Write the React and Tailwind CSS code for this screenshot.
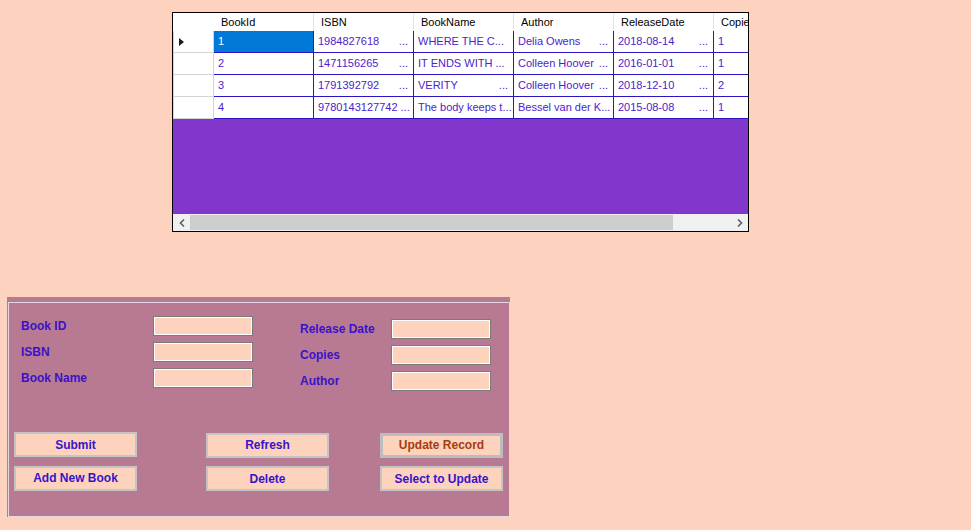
import React from "react";

const columns = ["BookId", "ISBN", "BookName", "Author", "ReleaseDate", "Copies"];

const books = [
    {
        id: "1",
        isbn: ["1984827618", true],
        name: ["WHERE THE C...", false],
        author: ["Delia Owens", true],
        date: ["2018-08-14", true],
        copies: "1",
    },
    {
        id: "2",
        isbn: ["1471156265", true],
        name: ["IT ENDS WITH ...", false],
        author: ["Colleen Hoover", true],
        date: ["2016-01-01", true],
        copies: "1",
    },
    {
        id: "3",
        isbn: ["1791392792", true],
        name: ["VERITY", true],
        author: ["Colleen Hoover", true],
        date: ["2018-12-10", true],
        copies: "2",
    },
    {
        id: "4",
        isbn: ["9780143127742", true],
        name: ["The body keeps t...", false],
        author: ["Bessel van der K...", false],
        date: ["2015-08-08", true],
        copies: "1",
    },
];

function Cell({ value }) {
    const [text, dots] = value;
    return (
        <div className="w-[100px] flex-none h-full border-r border-b border-[#2a14c6] pl-[4px] pr-[5px] flex items-center justify-between gap-[3px] whitespace-nowrap overflow-hidden">
            <span>{text}</span>
            {dots && <span>...</span>}
        </div>
    );
}

function Field({ label, width }) {
    return (
        <div className="flex items-center h-[20px]">
            <span className={`${width} flex-none font-bold text-[12px] text-[#3a12c9]`}>{label}</span>
            <div className="w-[100px] h-[20px] bg-[#fdd3be] border border-[#7a7a7a] shadow-[inset_0_0_0_1px_#ffffff]" />
        </div>
    );
}

function Button({ label, main }) {
    return (
        <button
            className={
                main
                    ? "w-[123px] h-[25px] bg-[#fdd3be] border-[3px] border-[#bdbdbd] font-bold text-[12px] text-[#a63c0c]"
                    : "w-[123px] h-[25px] bg-[#fdd3be] border-2 border-[#c4c4c4] font-bold text-[12px] text-[#3a12c9]"
            }
        >
            {label}
        </button>
    );
}

export default function App() {
    return (
        <div className="w-[971px] h-[530px] bg-[#fdd2be] overflow-hidden pt-[12px] font-['Liberation_Sans',Arial,sans-serif]">
            {/* book grid */}
            <div className="ml-[172px] w-[577px] h-[220px] border border-black flex flex-col overflow-hidden text-[11px]">
                <div className="h-[18px] flex-none flex bg-white text-black">
                    <div className="w-[41px] flex-none" />
                    {columns.map(col => (
                        <div
                            key={col}
                            className="w-[100px] flex-none h-full border-r border-[#e3e3e3] pl-[7px] flex items-center whitespace-nowrap overflow-hidden"
                        >
                            {col}
                        </div>
                    ))}
                </div>

                {books.map((book, index) => (
                    <div key={book.id} className="h-[22px] flex-none flex bg-white text-[#4c22cc]">
                        <div className="w-[41px] flex-none h-full border-l border-r border-b border-[#d4d4d4] flex items-center pl-[5px]">
                            {index === 0 && (
                                <svg width="5" height="8" viewBox="0 0 5 8">
                                    <path d="M0 0 L5 4 L0 8 Z" fill="#1a1a1a" />
                                </svg>
                            )}
                        </div>
                        <div
                            className={`w-[100px] flex-none h-full border-r border-b border-[#2a14c6] pl-[4px] flex items-center ${
                                index === 0 ? "bg-[#0078d7] text-white" : ""
                            }`}
                        >
                            {book.id}
                        </div>
                        <Cell value={book.isbn} />
                        <Cell value={book.name} />
                        <Cell value={book.author} />
                        <Cell value={book.date} />
                        <div className="w-[100px] flex-none h-full border-b border-[#2a14c6] pl-[4px] flex items-center">
                            {book.copies}
                        </div>
                    </div>
                ))}

                <div className="flex-1 bg-[#8236cb]" />

                <div className="h-[17px] flex-none flex items-center bg-[#f0f0f0]">
                    <div className="w-[17px] h-full flex items-center justify-center">
                        <svg width="6" height="8" viewBox="0 0 6 8">
                            <path d="M5 0.5 L1.5 4 L5 7.5" stroke="#606060" strokeWidth="1.6" fill="none" />
                        </svg>
                    </div>
                    <div className="w-[483px] h-[15px] bg-[#cdcdcd]" />
                    <div className="flex-1" />
                    <div className="w-[17px] h-full flex items-center justify-center">
                        <svg width="6" height="8" viewBox="0 0 6 8">
                            <path d="M1 0.5 L4.5 4 L1 7.5" stroke="#606060" strokeWidth="1.6" fill="none" />
                        </svg>
                    </div>
                </div>
            </div>

            {/* book details group */}
            <div className="ml-[7px] mt-[65px] w-[503px] h-[220px] bg-[#b87a92] pt-[5px] pl-px">
                <div className="w-[502px] h-[215px] border border-[#e4d8e0] pt-[13px] pl-[12px]">
                    <div className="flex">
                        <div className="flex flex-col gap-[6px]">
                            <Field label="Book ID" width="w-[132px]" />
                            <Field label="ISBN" width="w-[132px]" />
                            <Field label="Book Name" width="w-[132px]" />
                        </div>
                        <div className="flex flex-col gap-[6px] ml-[47px] mt-[3px]">
                            <Field label="Release Date" width="w-[91px]" />
                            <Field label="Copies" width="w-[91px]" />
                            <Field label="Author" width="w-[91px]" />
                        </div>
                    </div>

                    <div className="mt-[41px] -ml-[7px] flex flex-col gap-[8px]">
                        <div className="flex">
                            <Button label="Submit" />
                            <div className="ml-[69px]">
                                <Button label="Refresh" />
                            </div>
                            <div className="ml-[51px]">
                                <Button label="Update Record" main />
                            </div>
                        </div>
                        <div className="flex">
                            <Button label="Add New Book" />
                            <div className="ml-[69px]">
                                <Button label="Delete" />
                            </div>
                            <div className="ml-[51px]">
                                <Button label="Select to Update" />
                            </div>
                        </div>
                    </div>
                </div>
            </div>
        </div>
    );
}
